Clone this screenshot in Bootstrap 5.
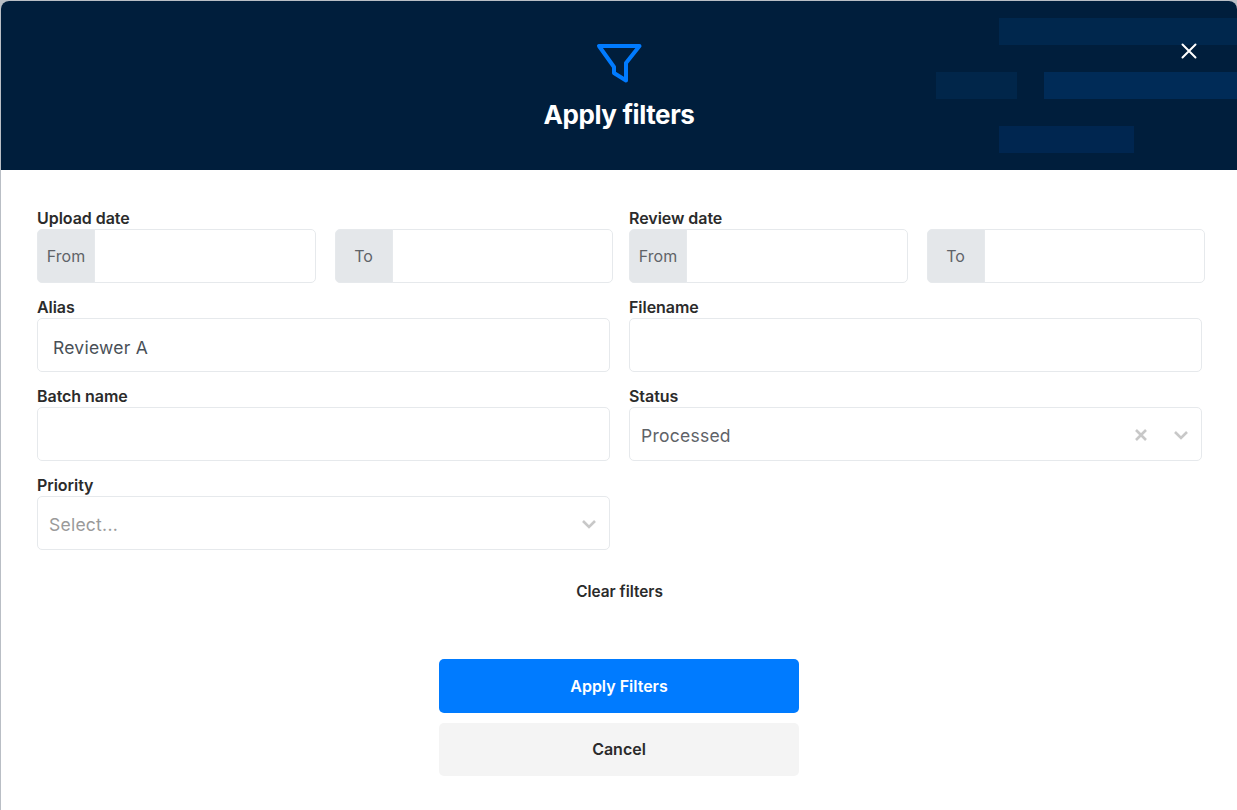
<!DOCTYPE html>
<html lang="en">
<head>
    <meta charset="UTF-8">
    <meta name="viewport" content="width=device-width, initial-scale=1.0">
    <title>Apply filters</title>
    <link href="https://cdn.jsdelivr.net/npm/bootstrap@5.3.3/dist/css/bootstrap.min.css" rel="stylesheet">
    <style>
        html, body {
            height: 100%;
        }
        body {
            font-family: Inter, "Liberation Sans", sans-serif;
            background-color: #b9bec5;
            color: #2b2b2b;
            overflow: hidden;
        }
        .filter-dialog {
            height: 809px;
            margin: 1px 0 0 1px;
            background-color: #fff;
            border-radius: 8px 8px 0 0;
            overflow: hidden;
        }
        .filter-head {
            height: 169px;
            background-color: #001e3c;
            padding-top: 42px;
        }
        .filter-head h1 {
            font-size: 26px;
            font-weight: 700;
            letter-spacing: -0.4px;
            line-height: 32px;
            color: #fff;
            margin: 14px 0 0;
        }
        .head-bars {
            position: absolute;
            top: -1px;
            right: 0;
        }
        .head-close {
            position: absolute;
            top: 41px;
            right: 39px;
            width: 18px;
            height: 18px;
            padding: 0;
            border: 0;
            background: none;
            line-height: 0;
        }
        .filter-body {
            padding: 39px 35px 0 36px;
        }
        .filter-row {
            --bs-gutter-x: 19px;
            --bs-gutter-y: 0;
        }
        .filter-field {
            height: 89px;
        }
        .filter-label {
            display: block;
            font-size: 16px;
            font-weight: 600;
            letter-spacing: -0.05px;
            line-height: 19px;
            margin: 0 0 1px;
        }
        .date-row {
            margin-right: -12.5px;
        }
        .form-control.filter-input,
        .filter-select,
        .filter-addon {
            height: 54px;
            border-color: #e6e9ec;
            font-size: 17.5px;
            letter-spacing: 0.25px;
            color: #495057;
        }
        .form-control.filter-input {
            padding: 11px 12px 6px 15px;
            border-radius: 5px;
        }
        .filter-addon {
            width: 58px;
            justify-content: center;
            padding: 0;
            background-color: #e4e7ea;
            font-size: 16px;
            letter-spacing: 0;
            color: #5f6368;
            border-radius: 5px 0 0 5px;
        }
        .filter-select {
            border: 1px solid #e6e9ec;
            border-radius: 5px;
            padding: 2px 12px 0 11px;
        }
        .select-blank,
        .select-value {
            padding-top: 2px;
        }
        .select-blank {
            color: #9a9a9a;
        }
        .select-value {
            color: #5f6368;
        }
        .select-clear {
            margin-right: 25px;
        }
        .clear-link {
            display: block;
            margin: 17px auto 0;
            padding: 0;
            border: 0;
            background: none;
            font-size: 15.4px;
            font-weight: 600;
            line-height: 20px;
            color: #2b2b2b;
        }
        .filter-actions {
            width: 360px;
            margin: 57px 0 0 402px;
            gap: 10px;
        }
        .filter-btn {
            height: 54px;
            border: 0;
            border-radius: 5px;
            font-size: 16px;
            font-weight: 600;
        }
        .filter-btn-apply {
            background-color: #007bff;
            color: #fff;
        }
        .filter-btn-cancel {
            height: 53px;
            padding-top: 5px;
            background-color: #f4f4f4;
            color: #2b2b2b;
        }
    </style>
</head>
<body>
    <div class="filter-dialog d-flex flex-column">
        <div class="filter-head position-relative text-center">
            <svg class="head-bars" width="301" height="170" viewBox="0 0 301 170">
                <rect x="63" y="18" width="238" height="27" fill="#00274d"/>
                <rect x="0" y="72" width="81" height="27" fill="#01264a"/>
                <rect x="108" y="72" width="193" height="27" fill="#002b57"/>
                <rect x="63" y="126" width="135" height="27" fill="#002650"/>
            </svg>
            <svg class="d-block mx-auto position-relative" width="46" height="42" viewBox="0 0 46 42" fill="none">
                <path d="M3 3H43.5L30 20V37.5L18 30V24Z" stroke="#007bff" stroke-width="4" stroke-linejoin="round" stroke-linecap="round"/>
            </svg>
            <h1 class="position-relative">Apply filters</h1>
            <button class="head-close" type="button" aria-label="Close">
                <svg width="18" height="18" viewBox="0 0 18 18" fill="none">
                    <path d="M2.5 2.5L15.5 15.5M15.5 2.5L2.5 15.5" stroke="#fff" stroke-width="2" stroke-linecap="round"/>
                </svg>
            </button>
        </div>

        <div class="filter-body">
            <div class="row filter-row">
                <div class="col-6 filter-field">
                    <label class="filter-label">Upload date</label>
                    <div class="row filter-row date-row">
                        <div class="col-6">
                            <div class="input-group">
                                <span class="input-group-text filter-addon">From</span>
                                <input type="text" class="form-control filter-input">
                            </div>
                        </div>
                        <div class="col-6">
                            <div class="input-group">
                                <span class="input-group-text filter-addon">To</span>
                                <input type="text" class="form-control filter-input">
                            </div>
                        </div>
                    </div>
                </div>
                <div class="col-6 filter-field">
                    <label class="filter-label">Review date</label>
                    <div class="row filter-row date-row">
                        <div class="col-6">
                            <div class="input-group">
                                <span class="input-group-text filter-addon">From</span>
                                <input type="text" class="form-control filter-input">
                            </div>
                        </div>
                        <div class="col-6">
                            <div class="input-group">
                                <span class="input-group-text filter-addon">To</span>
                                <input type="text" class="form-control filter-input">
                            </div>
                        </div>
                    </div>
                </div>

                <div class="col-6 filter-field">
                    <label class="filter-label">Alias</label>
                    <input type="text" class="form-control filter-input" value="Reviewer A">
                </div>
                <div class="col-6 filter-field">
                    <label class="filter-label">Filename</label>
                    <input type="text" class="form-control filter-input">
                </div>

                <div class="col-6 filter-field">
                    <label class="filter-label">Batch name</label>
                    <input type="text" class="form-control filter-input">
                </div>
                <div class="col-6 filter-field">
                    <label class="filter-label">Status</label>
                    <div class="filter-select d-flex align-items-center">
                        <span class="select-value flex-grow-1">Processed</span>
                        <svg class="select-clear" width="14" height="14" viewBox="0 0 14 14" fill="none">
                            <path d="M2 2L12 12M12 2L2 12" stroke="#c8c8c8" stroke-width="2.6"/>
                        </svg>
                        <svg width="16" height="14" viewBox="0 0 16 14" fill="none">
                            <path d="M2 4L8 10L14 4" stroke="#c8c8c8" stroke-width="2.6"/>
                        </svg>
                    </div>
                </div>

                <div class="col-6 filter-field">
                    <label class="filter-label">Priority</label>
                    <div class="filter-select d-flex align-items-center">
                        <span class="select-blank flex-grow-1">Select...</span>
                        <svg width="16" height="14" viewBox="0 0 16 14" fill="none">
                            <path d="M2 4L8 10L14 4" stroke="#c8c8c8" stroke-width="2.6"/>
                        </svg>
                    </div>
                </div>
            </div>

            <button class="clear-link" type="button">Clear filters</button>

            <div class="filter-actions d-grid">
                <button class="btn filter-btn filter-btn-apply" type="button">Apply Filters</button>
                <button class="btn filter-btn filter-btn-cancel" type="button">Cancel</button>
            </div>
        </div>
    </div>

    <script src="https://cdn.jsdelivr.net/npm/bootstrap@5.3.3/dist/js/bootstrap.bundle.min.js"></script>
</body>
</html>
